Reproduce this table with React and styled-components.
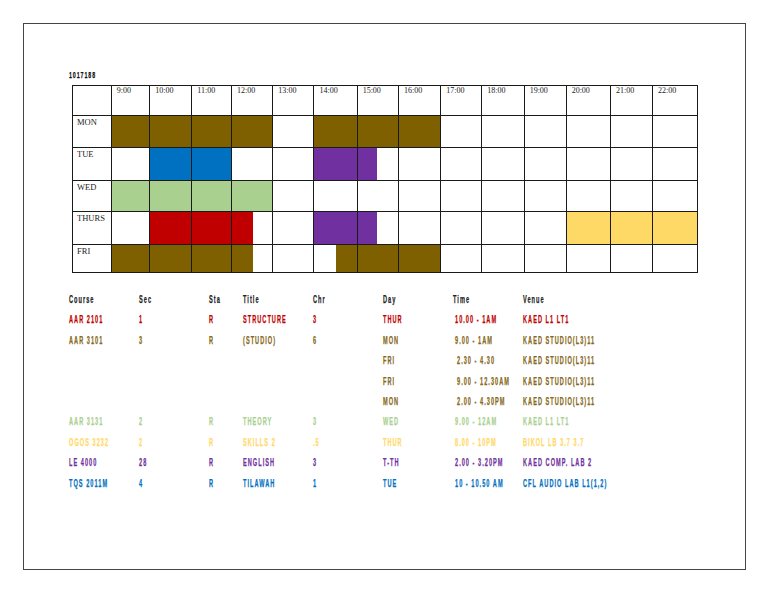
import React from 'react'
import styled, { createGlobalStyle } from 'styled-components';

const GlobalStyle = createGlobalStyle`
  html, body {
    margin: 0;
    padding: 0;
    background: #fff;
  }
`;

const COLORS = {
  brown: '#7F6000',
  blue: '#0070C0',
  green: '#A9D08E',
  red: '#C00000',
  purple: '#7030A0',
  yellow: '#FFD966',
};

const TEXT = {
  red: '#C00000',
  brown: '#86681A',
  green: '#A9D08E',
  yellow: '#FFD966',
  purple: '#7030A0',
  blue: '#0070C0',
};

const Page = styled.div`
  width: 768px;
  height: 594px;
  box-sizing: border-box;
  padding: 23px 22px 24px 23px;
`;

const Frame = styled.div`
  height: 100%;
  box-sizing: border-box;
  border: 1.5px solid #444;
  padding: 46px 0 0 45px;
  display: flex;
  flex-direction: column;
`;

// the printed schedule uses a tall, narrow, widely spaced face: squeeze a regular one
const Squeeze = styled.span`
  display: inline-block;
  transform: scaleX(${p => p.$scale || 0.51});
  transform-origin: left center;
  white-space: nowrap;
  -webkit-text-stroke: 0.25px currentColor;
`;

const Heading = styled.div`
  font-family: "Liberation Sans", Arial, sans-serif;
  font-weight: 700;
  font-size: 9.5px;
  letter-spacing: 1.6px;
  color: #111;
  height: 15px;
  line-height: 10px;
`;

const Grid = styled.table`
  margin-left: 3px;
  border-collapse: collapse;
  table-layout: fixed;
  width: 625px;
`;

const Cell = styled.td`
  position: relative;
  border: 1px solid #1a1a1a;
  padding: 0;
  vertical-align: top;
  height: ${p => p.$h}px;
  box-sizing: border-box;
`;

const Label = styled.span`
  position: relative;
  z-index: 1;
  display: block;
  padding: ${p => (p.$day ? '2px 0 0 4px' : '1px 0 0 5px')};
  font-family: "Liberation Serif", "Times New Roman", serif;
  font-size: ${p => (p.$day ? '8.5px' : '8px')};
  color: #222;
  line-height: 1.1;
`;

const Fill = styled.div`
  position: absolute;
  top: 0;
  bottom: 0;
  ${p => (p.$side === 'right' ? 'right: 0;' : 'left: 0;')}
  width: ${p => p.$w || '100%'};
  background: ${p => p.$color};
`;

const List = styled.div`
  margin-top: 19px;
  display: grid;
  grid-template-columns: 70px 70px 34px 70px 70px 70px 70px auto;
  grid-auto-rows: 20.4px;
  font-family: "Liberation Sans", Arial, sans-serif;
  font-weight: 700;
  font-size: 11px;
  letter-spacing: 2px;
`;

const Item = styled.div`
  color: ${p => p.$color || '#222'};
  white-space: nowrap;
  padding-left: ${p => p.$indent || 0}px;
  line-height: 14px;
`;

const hours = ['9:00', '10:00', '11:00', '12:00', '13:00', '14:00', '15:00', '16:00', '17:00', '18:00', '19:00', '20:00', '21:00', '22:00'];
const widths = [38.7, 38.6, 42, 39.7, 41.3, 41.2, 43.2, 41.3, 42.3, 41, 42.4, 42, 44.3, 42, 44.7];

// fills per day: index of hour -> [color, width, side]
const days = [
  { name: 'MON', h: 32, fills: { 0: ['brown'], 1: ['brown'], 2: ['brown'], 3: ['brown'], 5: ['brown'], 6: ['brown'], 7: ['brown'] } },
  { name: 'TUE', h: 33, fills: { 1: ['blue'], 2: ['blue'], 5: ['purple'], 6: ['purple', '48%'] } },
  { name: 'WED', h: 31, fills: { 0: ['green'], 1: ['green'], 2: ['green'], 3: ['green'] } },
  { name: 'THURS', h: 33, fills: { 1: ['red'], 2: ['red'], 3: ['red', '52%'], 5: ['purple'], 6: ['purple', '48%'], 11: ['yellow'], 12: ['yellow'], 13: ['yellow'] } },
  { name: 'FRI', h: 28, fills: { 0: ['brown'], 1: ['brown'], 2: ['brown'], 3: ['brown', '52%'], 5: ['brown', '50%', 'right'], 6: ['brown'], 7: ['brown'] } },
];

const courses = [
  { c: 'red', cells: ['AAR 2101', '1', 'R', 'STRUCTURE', '3', 'THUR', '10.00 - 1AM', 'KAED L1 LT1'] },
  { c: 'brown', cells: ['AAR 3101', '3', 'R', '(STUDIO)', '6', 'MON', '9.00 - 1AM', 'KAED STUDIO(L3)11'] },
  { c: 'brown', cells: ['', '', '', '', '', 'FRI', ' 2.30 - 4.30', 'KAED STUDIO(L3)11'] },
  { c: 'brown', cells: ['', '', '', '', '', 'FRI', ' 9.00 - 12.30AM', 'KAED STUDIO(L3)11'] },
  { c: 'brown', cells: ['', '', '', '', '', 'MON', ' 2.00 - 4.30PM', 'KAED STUDIO(L3)11'] },
  { c: 'green', cells: ['AAR 3131', '2', 'R', 'THEORY', '3', 'WED', '9.00 - 12AM', 'KAED L1 LT1'] },
  { c: 'yellow', cells: ['OGOS 3232', '2', 'R', 'SKILLS 2', '.5', 'THUR', '8.00 - 10PM', 'BIKOL LB 3.7 3.7'] },
  { c: 'purple', cells: ['LE 4000', '28', 'R', 'ENGLISH', '3', 'T-TH', '2.00 - 3.20PM', 'KAED COMP. LAB 2'] },
  { c: 'blue', cells: ['TQS 2011M', '4', 'R', 'TILAWAH', '1', 'TUE', '10 - 10.50 AM', 'CFL AUDIO LAB L1(1,2)'] },
];

const headers = ['Course', 'Sec', 'Sta', 'Title', 'Chr', 'Day', 'Time', 'Venue'];

export default function App() {
  return (
    <Page>
      <GlobalStyle />
      <Frame>
        <Heading><Squeeze $scale={0.56}>1017188</Squeeze></Heading>
        <Grid>
          <colgroup>
            {widths.map((w, i) => <col key={i} style={{ width: w }} />)}
          </colgroup>
          <tbody>
            <tr>
              <Cell $h={30} />
              {hours.map(h => (
                <Cell key={h} $h={30}><Label>{h}</Label></Cell>
              ))}
            </tr>
            {days.map(d => (
              <tr key={d.name}>
                <Cell $h={d.h}><Label $day>{d.name}</Label></Cell>
                {hours.map((h, i) => {
                  const f = d.fills[i];
                  return (
                    <Cell key={h} $h={d.h}>
                      {f && <Fill $color={COLORS[f[0]]} $w={f[1]} $side={f[2]} />}
                    </Cell>
                  );
                })}
              </tr>
            ))}
          </tbody>
        </Grid>
        <List>
          {headers.map(h => <Item key={h}><Squeeze>{h}</Squeeze></Item>)}
          {courses.map((row, r) =>
            row.cells.map((t, i) => (
              <Item key={r + '-' + i} $color={TEXT[row.c]} $indent={i === 6 ? (t.startsWith(' ') ? 4 : 2) : 0}>
                <Squeeze>{t.trim()}</Squeeze>
              </Item>
            ))
          )}
        </List>
      </Frame>
    </Page>
  )
}
